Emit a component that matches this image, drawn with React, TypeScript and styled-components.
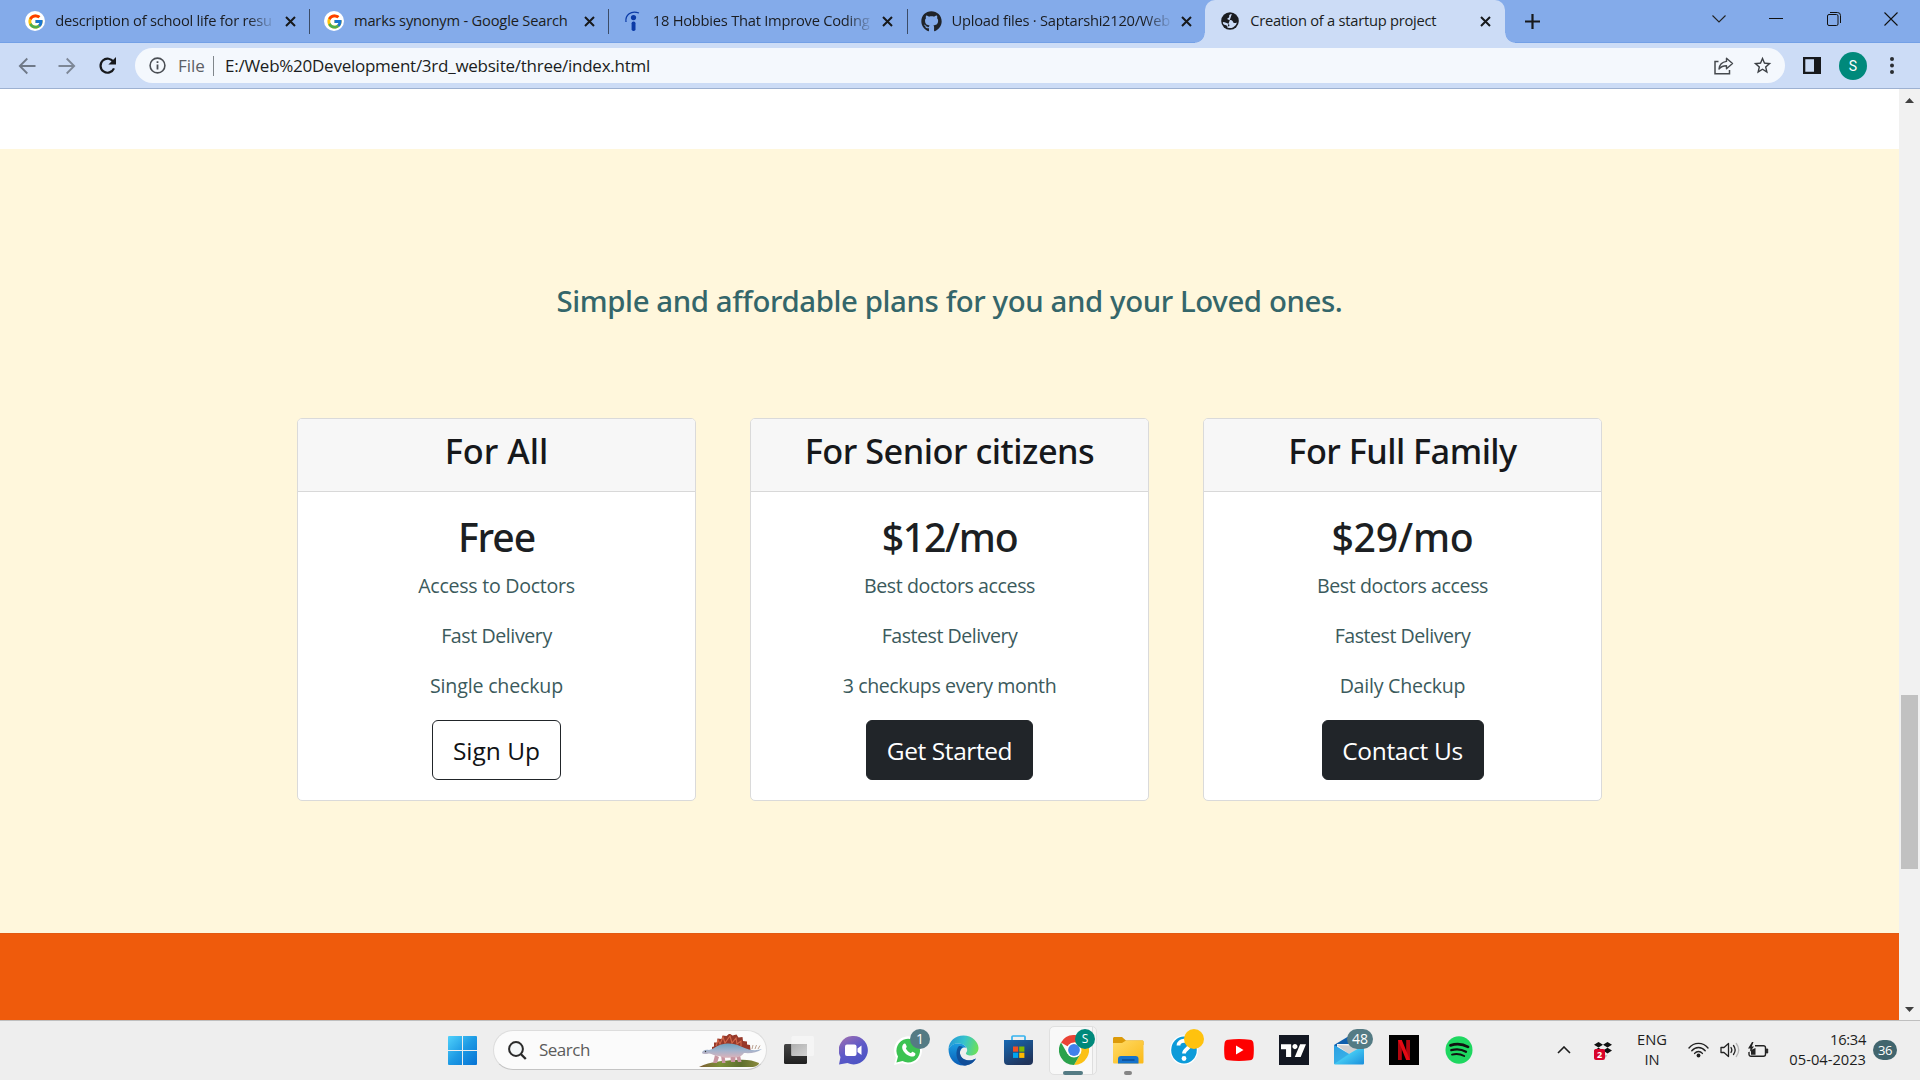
import React from "react";
import styled, { createGlobalStyle, css } from "styled-components";
import { FcGoogle } from "react-icons/fc";
import { FaGithub } from "react-icons/fa";
import { SiTradingview } from "react-icons/si";
import { MdStarBorder } from "react-icons/md";

const GlobalStyle = createGlobalStyle`
  * { box-sizing: border-box; }
  body { margin: 0; overflow: hidden; }
  svg { display: block; flex: none; }
`;

const Screen = styled.div`
  width: 1920px;
  height: 1080px;
  display: flex;
  flex-direction: column;
  font-family: "Open Sans", "Noto Sans", sans-serif;
  color: #1b1d21;
  overflow: hidden;
`;

/* ---------- browser chrome ---------- */

const TabStrip = styled.div`
  height: 43px;
  flex: none;
  display: flex;
  background: #84abea;
  box-shadow: inset 0 -1px 0 #73a0e6;
  padding-left: 10.25px;
`;

const Tab = styled.div<{ $active?: boolean }>`
  width: 298.75px;
  height: 43px;
  flex: none;
  display: flex;
  align-items: center;
  padding: 0 15px 1px 15px;
  position: relative;
  ${p =>
    p.$active &&
    css`
      width: 300px;
      background: #ccdcf6;
      border-radius: 10px 10px 0 0;
      &::before,
      &::after {
        content: "";
        position: absolute;
        bottom: 0;
        width: 10px;
        height: 10px;
      }
      &::before {
        left: -10px;
        background: radial-gradient(circle at 0 0, transparent 9.2px, #ccdcf6 10px);
      }
      &::after {
        right: -10px;
        background: radial-gradient(circle at 100% 0, transparent 9.2px, #ccdcf6 10px);
      }
    `}
`;

const TabDivider = styled.div`
  position: absolute;
  right: -1px;
  top: 9px;
  width: 1px;
  height: 25px;
  background: #3b4c68;
`;

const TabIcon = styled.div`
  width: 20px;
  height: 20px;
  flex: none;
  display: flex;
  align-items: center;
  justify-content: center;
`;

const RoundIcon = styled(TabIcon)`
  border-radius: 50%;
  background: #fff;
`;

const TabTitle = styled.div<{ $ls: number; $fade?: boolean }>`
  width: 220px;
  margin-left: 10px;
  padding-bottom: 2px;
  flex: none;
  overflow: hidden;
  white-space: nowrap;
  font-size: 14.7px;
  line-height: 24px;
  letter-spacing: ${p => p.$ls}px;
  ${p =>
    p.$fade &&
    css`
      mask-image: linear-gradient(to right, #000 193px, transparent 221px);
    `}
`;

const TabClose = styled.div`
  margin-left: 9.5px;
`;

const WindowControls = styled.div`
  margin-left: auto;
  height: 37px;
  display: flex;
  align-items: center;
`;

const ControlCell = styled.div`
  width: 57.5px;
  display: flex;
  justify-content: center;
`;

const NewTab = styled.div`
  margin: 14px 0 0 20px;
`;

const Toolbar = styled.div`
  height: 46px;
  flex: none;
  display: flex;
  align-items: center;
  background: #ccdcf6;
  border-bottom: 1px solid #9db1d1;
  padding: 0 18px;
`;

const NavButtons = styled.div`
  display: flex;
  gap: 22px;
  width: 117px;
  align-items: center;
`;

const AddressBar = styled.div`
  width: 1650px;
  height: 35px;
  border-radius: 18px;
  background: #f4f8fd;
  display: flex;
  align-items: center;
  padding: 0 12px 0 14px;
`;

const Scheme = styled.span`
  margin-left: 12px;
  width: 26px;
  font-size: 17px;
  line-height: 30px;
  color: #5c6066;
`;

const SchemeDivider = styled.span`
  width: 1px;
  height: 20px;
  margin: 0 11px 0 9px;
  background: #80868b;
`;

const Url = styled.span`
  font-size: 17px;
  line-height: 30px;
  letter-spacing: -0.25px;
`;

const AddressActions = styled.div`
  margin-left: auto;
  display: flex;
  gap: 18px;
  align-items: center;
`;

const ToolbarActions = styled.div`
  margin-left: 18px;
  display: flex;
  align-items: center;
`;

const Avatar = styled.div`
  width: 28px;
  height: 28px;
  margin-left: 18px;
  margin-right: 23px;
  border-radius: 50%;
  background: #00897b;
  color: #fff;
  font: 14px/28px Roboto, sans-serif;
  text-align: center;
`;

/* ---------- page ---------- */

const Viewport = styled.div`
  height: 931px;
  flex: none;
  display: flex;
`;

const Page = styled.main`
  width: 1899px;
  display: flex;
  flex-direction: column;
  background: #fff;
`;

const Pricing = styled.section`
  margin-top: 60px;
  height: 784px;
  flex: none;
  background: #fff7dc;
  padding-top: 134px;
  font-family: "Noto Sans", sans-serif;
`;

const PricingTitle = styled.h3`
  margin: 0;
  height: 36px;
  font-size: 29.4px;
  line-height: 36px;
  font-weight: 500;
  letter-spacing: -0.4px;
  text-align: center;
  white-space: nowrap;
  color: #34666a;
`;

const Plans = styled.div`
  margin: 99px 297px 0 297px;
  display: flex;
  justify-content: space-between;
`;

const Card = styled.article`
  width: 399px;
  height: 383px;
  border: 1px solid #dadada;
  border-radius: 5px;
  background: #fff;
  overflow: hidden;
  text-align: center;
  white-space: nowrap;
`;

const CardHeader = styled.div`
  background: #f7f7f7;
  border-bottom: 1px solid #d8d8d8;
  padding: 11px 0 19px;
`;

const PlanName = styled.h2<{ $ls: number }>`
  margin: 0;
  font-size: 34.3px;
  line-height: 42px;
  font-weight: 500;
  letter-spacing: ${p => p.$ls}px;
  color: #16181b;
`;

const CardBody = styled.div`
  padding: 21px 20px 20px;
  display: flex;
  flex-direction: column;
  align-items: center;
`;

const Price = styled.h2<{ $ls: number }>`
  margin: 0 0 10px;
  font-size: 39.2px;
  line-height: 48px;
  font-weight: 500;
  letter-spacing: ${p => p.$ls}px;
  color: #1c1f23;
`;

const Feature = styled.p<{ $ls: number }>`
  margin: 0 0 20px;
  font-family: "Open Sans", sans-serif;
  font-size: 19.6px;
  line-height: 30px;
  letter-spacing: ${p => p.$ls}px;
  color: #3b5a5c;
`;

const PlanButton = styled.button<{ $w: number; $ls: number; $outline?: boolean }>`
  width: ${p => p.$w}px;
  height: 60px;
  margin-top: -1px;
  padding: 1px 0 0;
  border: 1px solid #212529;
  border-radius: 6px;
  background: ${p => (p.$outline ? "#fff" : "#212529")};
  color: ${p => (p.$outline ? "#101214" : "#fff")};
  font-family: "Open Sans", sans-serif;
  font-size: 24.5px;
  line-height: 57px;
  letter-spacing: ${p => p.$ls}px;
`;

const NextSection = styled.section`
  flex: 1;
  background: #ef5b0c;
  border-top: 1px solid #e25a12;
`;

const Scrollbar = styled.div`
  width: 21px;
  background: #f1f1f1;
  display: flex;
  flex-direction: column;
  align-items: center;
  padding: 9px 0 8px;
`;

const Thumb = styled.div`
  width: 17px;
  height: 174px;
  margin-top: 592px;
  margin-bottom: auto;
  background: #c1c1c1;
`;

/* ---------- taskbar ---------- */

const Taskbar = styled.footer`
  height: 60px;
  flex: none;
  display: flex;
  align-items: center;
  background: #eeeeee;
  border-top: 1px solid #bfbfbf;
  padding: 0 23px 1px 448px;
`;

const SearchBox = styled.div`
  width: 274px;
  height: 40px;
  margin: 0 4px 0 16px;
  border: 1px solid #dddddd;
  border-bottom-color: #c4c4c4;
  border-radius: 20px;
  background: #fbfbfb;
  display: flex;
  align-items: center;
  padding-left: 14px;
`;

const SearchLabel = styled.span`
  margin: 0 0 0 12px;
  width: 160px;
  font-size: 17px;
  line-height: 28px;
  letter-spacing: -0.5px;
  color: #5b5b5b;
`;

const AppCell = styled.div`
  width: 55px;
  height: 59px;
  display: flex;
  align-items: center;
  justify-content: center;
  position: relative;
`;

const ActiveTile = styled.div`
  position: absolute;
  left: 3px;
  top: 5px;
  width: 48px;
  height: 49px;
  border: 1px solid #e0e0e0;
  border-radius: 5px;
  background: linear-gradient(to right, #f8f8f8 42px, #dedede 42px, #dedede 43px, #f3f3f3 43px);
`;

const AppIcon = styled.div`
  position: relative;
`;

const Badge = styled.div<{ $w?: number; $x: number; $bg?: string; $size?: number }>`
  position: absolute;
  left: ${p => p.$x}px;
  top: 8px;
  width: ${p => p.$w ?? 20}px;
  height: 20px;
  border-radius: 10px;
  background: ${p => p.$bg ?? "#547b84"};
  color: #fff;
  font-size: ${p => p.$size ?? 14}px;
  line-height: 20px;
  text-align: center;
`;

const Indicator = styled.div<{ $w: number; $bg: string }>`
  position: absolute;
  top: 50px;
  left: ${p => 27 - p.$w / 2}px;
  width: ${p => p.$w}px;
  height: 4px;
  border-radius: 2px;
  background: ${p => p.$bg};
`;

const Tray = styled.div`
  margin-left: auto;
  display: flex;
  align-items: center;
`;

const TrayCell = styled.div<{ $w: number }>`
  width: ${p => p.$w}px;
  display: flex;
  justify-content: center;
  position: relative;
`;

const TrayBadge = styled.div`
  position: absolute;
  left: 11px;
  top: 7px;
  width: 11px;
  height: 11px;
  border-radius: 2px;
  background: #d9042b;
  color: #fff;
  font: bold 9px/11px "Noto Sans", sans-serif;
  text-align: center;
`;

const TrayText = styled.div<{ $w: number; $align: string }>`
  width: ${p => p.$w}px;
  display: flex;
  flex-direction: column;
  align-items: ${p => p.$align};
  padding-bottom: 2px;
  font-size: 14.7px;
  line-height: 20px;
  white-space: nowrap;
  color: #1d1d1d;
`;

const Time = styled.span`
  letter-spacing: -0.3px;
`;

const Notifications = styled.div`
  width: 24px;
  height: 20px;
  margin-left: 7px;
  border-radius: 10px;
  background: #41656e;
  color: #fff;
  font-size: 13px;
  line-height: 20px;
  letter-spacing: -0.4px;
  text-align: center;
`;

/* ---------- drawings ---------- */

const CrossIcon = () => (
  <svg width="11" height="11" viewBox="0 0 11 11">
    <path d="M1 1l9 9M10 1l-9 9" stroke="#17191c" strokeWidth="2" />
  </svg>
);

const GlobeIcon = () => (
  <svg width="18" height="18" viewBox="0 0 18 18">
    <circle cx="9" cy="9" r="8.800" fill="#1b1d21" />
    <path
      d="M10.800 1.900c-2.300.3-2.800 1.300-2.600 2.500.2 1-.9 1.200-1.600 1.800-.6.600.2 1.500 1.500 1.600 2 .1 3.600.7 3.900 2 .2 1.200 1.200 1.300 2.800 1.100l1.200-.5A7.200 7.200 0 0 1 6.300 15.500c.3-1 1.500-1.200 2-1.700.5-.7-.2-1.500-1-2-1.500-.8-3-1.600-5.400-1.800A7.200 7.200 0 0 0 2 11.500c.6 1.200 1.800 1.400 3 1.700 1.200.3 1 1.400 1.300 2.300"
      fill="#ccdcf6"
    />
  </svg>
);

const IndeedIcon = () => (
  <svg width="20" height="22" viewBox="0 0 20 22">
    <path d="M3 12C2 5 8 0 16 3" fill="none" stroke="#0b3aa6" strokeWidth="1.300" />
    <circle cx="10.500" cy="7.600" r="2.600" fill="#0b3aa6" />
    <rect x="8.600" y="11.500" width="3.900" height="9.500" rx="1.800" fill="#0b3aa6" />
  </svg>
);

const ArrowIcon = ({ flip, color }: { flip?: boolean; color: string }) => (
  <svg width="18" height="18" viewBox="0 0 18 18">
    <g transform={flip ? "translate(18 0) scale(-1 1)" : undefined} fill="none" stroke={color} strokeWidth="1.800">
      <path d="M17.500 9H2M9.300 1.500L1.800 9l7.500 7.500" />
    </g>
  </svg>
);

const ReloadIcon = () => (
  <svg width="19" height="18" viewBox="0 0 19 18">
    <path d="M15.600 5.200A7 7 0 1 0 16 11.400" fill="none" stroke="#17191c" strokeWidth="2.200" />
    <path d="M18 0v7.600h-7.600z" fill="#17191c" />
  </svg>
);

const InfoIcon = () => (
  <svg width="17" height="17" viewBox="0 0 17 17">
    <circle cx="8.500" cy="8.500" r="7.400" fill="none" stroke="#4a4e54" strokeWidth="1.600" />
    <path d="M8.500 7.500v5M8.500 4.200v1.800" stroke="#4a4e54" strokeWidth="1.800" />
  </svg>
);

const ShareIcon = () => (
  <svg width="20" height="18" viewBox="0 0 20 18">
    <path d="M4.500 4.500H1v12.300h14.500V13" fill="none" stroke="#45494e" strokeWidth="1.500" />
    <path d="M12.500 1.200l6 5.300-6 5.300V8.800C9 8.800 6.800 9.800 5 12c.4-4 3-7 7.500-7.600z" fill="none" stroke="#45494e" strokeWidth="1.400" strokeLinejoin="round" />
  </svg>
);

const WindowsLogo = () => (
  <svg width="29" height="29" viewBox="0 0 29 29">
    <defs>
      <linearGradient id="win" x1="0" y1="0" x2="1" y2="1">
        <stop offset="0" stopColor="#50d1fb" />
        <stop offset=".5" stopColor="#1d9ae4" />
        <stop offset="1" stopColor="#0672d4" />
      </linearGradient>
    </defs>
    <path d="M1 0h13v14H0V1a1 1 0 0 1 1-1zM15 0h13a1 1 0 0 1 1 1v13H15zM0 15h14v14H1a1 1 0 0 1-1-1zM15 15h14v13a1 1 0 0 1-1 1H15z" fill="url(#win)" />
  </svg>
);

const SearchIcon = () => (
  <svg width="19" height="19" viewBox="0 0 19 19">
    <circle cx="8" cy="8" r="6.900" fill="#f4f7f8" stroke="#2a2a2a" strokeWidth="2" />
    <path d="M12.800 13l5 5" stroke="#2a2a2a" strokeWidth="2.400" />
  </svg>
);

const Stegosaurus = () => (
  <svg width="63" height="33" viewBox="0 0 63 33">
    <defs>
      <linearGradient id="hill" x1="0" x2="1">
        <stop offset="0" stopColor="#7d5a33" />
        <stop offset=".35" stopColor="#7b9138" />
        <stop offset=".7" stopColor="#5d6f2d" />
        <stop offset="1" stopColor="#8b8a3d" />
      </linearGradient>
      <linearGradient id="hide" x1="0" y1="0" x2="0" y2="1">
        <stop offset="0" stopColor="#6ea0bd" />
        <stop offset=".5" stopColor="#a3b3cc" />
        <stop offset="1" stopColor="#dcb3ba" />
      </linearGradient>
    </defs>
    <path d="M0 33C12 27 24 27 36 26c10-1 18 0 24 3 0 2-3 3.500-6 4z" fill="url(#hill)" />
    <path d="M13 16l0-3 2-.5 0-4 3 0 .5-4 4 .5 1-3.500 4 .5 3-2.500 3 2 4-1 2 3 4-.5.500 4 4 .5 0 3 3 .5.500 5z" fill="#97392a" />
    <path d="M17 12l2-6 2 4 3-7 2 6 5-7 2 7 4-5 1 6 4-3 0 5" fill="none" stroke="#d2694b" strokeWidth="1.100" />
    <path d="M16 21l-2 8h4l2-6zM22 21l1 8h3.500l-1-8zM31 20l1 8h4l1-8zM36 19l3 9h3.500l-2-9z" fill="#c896a1" />
    <path d="M3 19c0-2 3-4 7-3 5-1 9-6 18-6.500C38 9 44 14 50 15.500c5 1 9 .8 13-.5-5 4-12 4.500-18 4-3 4-6 5-12 4-6 2-10 0-13-1-4 0-7-2-10-2.500-3 .8-6 1-7-.5z" fill="url(#hide)" />
    <path d="M53 15l1-4M56 15l1.500-4M59 15l2-3.500" stroke="#b9a08f" strokeWidth="1" />
    <circle cx="6.500" cy="17.500" r=".7" fill="#333" />
  </svg>
);

const TaskViewIcon = () => (
  <svg width="30" height="28" viewBox="0 0 30 28">
    <defs>
      <linearGradient id="tvd" x1="0" y1="0" x2="0" y2="1"><stop stopColor="#454545" /><stop offset="1" stopColor="#202020" /></linearGradient>
      <linearGradient id="tvo" x1="0" y1="0" x2="1" y2="1"><stop stopColor="#b0b0b0" /><stop offset="1" stopColor="#d2d2d2" /></linearGradient>
    </defs>
    <rect y="8" width="23" height="20" rx="1.500" fill="url(#tvd)" />
    <rect x="7.500" width="22.500" height="20" rx="1.500" fill="#f5f5f5" />
    <rect x="7.500" y="8" width="15.500" height="12" fill="url(#tvo)" />
  </svg>
);

const ChatIcon = () => (
  <svg width="29" height="29" viewBox="0 0 29 29">
    <defs>
      <linearGradient id="chat" x1=".1" y1="0" x2=".7" y2="1"><stop stopColor="#a06fb0" /><stop offset=".5" stopColor="#5f5ac8" /><stop offset="1" stopColor="#4b53c4" /></linearGradient>
    </defs>
    <path d="M14.500 0a14.200 14.200 0 1 1-6 27L0 28.500l1.500-7.500A14.200 14.200 0 0 1 14.500 0z" fill="url(#chat)" />
    <rect x="6" y="8.500" width="11.500" height="11.500" rx="2" fill="#fff" />
    <path d="M18.500 12.500l4-3v9.500l-4-3z" fill="#fff" />
  </svg>
);

const WhatsAppIcon = () => (
  <svg width="29" height="29" viewBox="0 0 29 29">
    <path d="M0 29l2-7.500A14 14 0 1 1 8 27z" fill="#fff" />
    <path d="M2.400 26.600l1.600-6A11.800 11.800 0 1 1 8.500 25z" fill="#3cc352" />
    <path d="M9.300 8.200c1-1.300 2.200-.8 2.600.4l.8 1.900c.2.600-1 1.700-.7 2.300 1 2 2.500 3.300 4.500 4.200.6.200 1.500-1.600 2.100-1.300l2.300 1.200c1.200.7.2 2.700-1 3.300-1.600.8-3.800.2-6-1-2.300-1.300-4.300-3.500-5.300-5.800-.7-1.800-.6-3.600.7-5.200z" fill="#fff" />
  </svg>
);

const EdgeIcon = () => (
  <svg width="31" height="31" viewBox="0 0 31 31">
    <defs>
      <linearGradient id="e1" x1="0" y1=".3" x2="1" y2=".5"><stop stopColor="#2597d8" /><stop offset=".5" stopColor="#36c3cc" /><stop offset="1" stopColor="#6be05a" /></linearGradient>
      <linearGradient id="e2" x1="0" y1="0" x2="0" y2="1"><stop stopColor="#1b9de2" /><stop offset="1" stopColor="#0a5cb5" /></linearGradient>
    </defs>
    <path d="M.5 14C1 6 7 .5 15.500.5S30.500 7 30.500 13c0 5-4 7.500-8 7.500-3 0-5-1.300-4.500-2.500 1-1.500 1.500-2.500 1-4C18 10 14 8.500 10 8.500c-4 0-7.500 2-9.500 5.500z" fill="url(#e1)" />
    <path d="M.5 14c2-4 6-6 10-5.500 4 0 7 2 8 4.500-3-1.500-6 .5-6.500 4-.5 5 4 9 10 8.500 2.500-.3 4-1 6-2-3 5-7.500 7-12.500 7C6.500 30.500.5 23 .5 14z" fill="url(#e2)" />
    <path d="M11 11c-4 4-4 16 5 19.500 5 0 9.500-2.500 12-7-8 4-15 1-16-5-.3-3 .5-5 3-6.500-1.500-.8-3-1-4-1z" fill="#124a93" opacity=".85" />
  </svg>
);

const StoreIcon = () => (
  <svg width="29" height="30" viewBox="0 0 29 30">
    <defs>
      <linearGradient id="st" x1="0" y1="0" x2=".6" y2="1"><stop stopColor="#1769b3" /><stop offset="1" stopColor="#20345b" /></linearGradient>
    </defs>
    <path d="M8 6V1.800C8 1.300 8.300 1 9 1h11c.7 0 1 .3 1 .8V6" fill="none" stroke="#35b2ee" strokeWidth="1.700" />
    <path d="M0 5h29v21a4 4 0 0 1-4 4H4a4 4 0 0 1-4-4z" fill="url(#st)" />
    <path d="M9 11.500h5.200v5.200H9z" fill="#f25022" />
    <path d="M15.200 11.500h5.200v5.200h-5.200z" fill="#7fba00" />
    <path d="M9 17.700h5.200v5.200H9z" fill="#00a4ef" />
    <path d="M15.200 17.700h5.200v5.200h-5.200z" fill="#ffb900" />
  </svg>
);

const ChromeIcon = () => (
  <svg width="30" height="30" viewBox="0 0 30 30">
    <path d="M15 15L2 7.500A15 15 0 0 1 28 7.500H15z" fill="#ea4335" />
    <path d="M28 7.500A15 15 0 0 1 15 30l6.500-11.300L15 7.500z" fill="#fbc116" />
    <path d="M2 7.500A15 15 0 0 0 15 30l6.500-11.300L15 15 8.500 18.700z" fill="#2ba24c" />
    <circle cx="15" cy="15" r="7.500" fill="#fff" />
    <circle cx="15" cy="15" r="5.900" fill="#4081ec" />
  </svg>
);

const ExplorerIcon = () => (
  <svg width="31" height="27" viewBox="0 0 31 27">
    <defs>
      <linearGradient id="fo" x1="0" y1="0" x2="1" y2="1"><stop stopColor="#ffdb67" /><stop offset="1" stopColor="#fbb917" /></linearGradient>
    </defs>
    <path d="M0 1.500C0 .6.600 0 1.500 0H9l4 3.500H29c1 0 1.500.5 1.500 1.500v3H0z" fill="#dc9a09" />
    <path d="M0 6h9l4-2.500h16.500c.7 0 1 .3 1 1V25c0 1-.5 1.500-1.500 1.500H1.500C.5 26.500 0 26 0 25z" fill="url(#fo)" />
    <path d="M5 26.500V22c0-2 1-3 3-3h14.500c2 0 3 1 3 3v4.500z" fill="#1673cc" />
    <path d="M9 23h12.500" stroke="#0b4d96" strokeWidth="1.500" />
  </svg>
);

const HelpIcon = () => (
  <svg width="28" height="30" viewBox="0 0 28 30">
    <ellipse cx="14" cy="15" rx="14" ry="14.800" fill="#fff" />
    <ellipse cx="14" cy="15" rx="12.800" ry="13.600" fill="#0d9bd9" />
    <path d="M8.500 10.500c0-6.500 11-6 11-.5 0 4-5.500 4-5.500 8.500" fill="none" stroke="#fff" strokeWidth="3.800" />
    <circle cx="14" cy="23.500" r="2.400" fill="#fff" />
  </svg>
);

const YouTubeIcon = () => (
  <svg width="30" height="22" viewBox="0 0 30 22">
    <path d="M4 .7Q15-.5 26 .7q3 .3 3.400 3.300.9 7 0 14-.4 3-3.400 3.300-11 1.200-22 0Q1 21 .6 18q-.9-7 0-14Q1 1 4 .7z" fill="#fe0000" />
    <path d="M12 6.500l7.500 4.500-7.500 4.500z" fill="#fff" />
  </svg>
);

const DarkTile = styled.div<{ $bg: string }>`
  width: 30px;
  height: 30px;
  display: flex;
  align-items: center;
  justify-content: center;
  background: ${p => p.$bg};
  color: #fff;
`;

const NetflixMark = () => (
  <svg width="12" height="20" viewBox="0 0 12 20">
    <path d="M0 0h3.800v20H0zM8.200 0H12v20H8.200z" fill="#b1060f" />
    <path d="M0 0h3.800L12 20H8.200z" fill="#e50914" />
  </svg>
);

const MailIcon = () => (
  <svg width="30" height="30" viewBox="0 0 30 30">
    <defs>
      <linearGradient id="ml" x1="0" y1="0" x2="1" y2="1"><stop stopColor="#2a9fe4" /><stop offset=".5" stopColor="#42c7f2" /><stop offset="1" stopColor="#1a8edb" /></linearGradient>
    </defs>
    <path d="M0 10L15 1l15 9v8H0z" fill="#0f5fad" />
    <path d="M3 9h24v8L15 22 3 15z" fill="#f1f1f1" />
    <path d="M3 10l24 1-11 9z" fill="#cfcfcf" />
    <path d="M0 10l15 9 15-9v18c0 1-.5 1.500-1.500 1.500h-27C.5 29.500 0 29 0 28z" fill="url(#ml)" />
    <path d="M0 29L15 19 0 10z" fill="#2f9fe0" opacity=".6" />
  </svg>
);

const SpotifyIcon = () => (
  <svg width="28" height="28" viewBox="0 0 28 28">
    <ellipse cx="14" cy="14" rx="13.500" ry="13.700" fill="#1ed760" />
    <g fill="none" stroke="#111" strokeLinecap="round">
      <path d="M5.500 9.300c6-1.800 12.500-1.200 17.500 1.600" strokeWidth="2.800" />
      <path d="M6.300 14.200c5.200-1.400 10.500-.8 14.700 1.600" strokeWidth="2.300" />
      <path d="M7 18.600c4.500-1.100 8.600-.6 12.200 1.400" strokeWidth="1.900" />
    </g>
  </svg>
);

const WifiIcon = () => (
  <svg width="21" height="16" viewBox="0 0 21 16">
    <g fill="none" stroke="#222" strokeWidth="1.400" strokeLinecap="round">
      <path d="M1 6C6-.2 15-.2 20 6" />
      <path d="M3.800 8.800c3.700-4.500 9.700-4.500 13.400 0" />
      <path d="M6.600 11.400c2.200-2.600 5.600-2.600 7.800 0" />
    </g>
    <circle cx="10.500" cy="13.500" r="1.900" fill="#222" />
  </svg>
);

const VolumeIcon = () => (
  <svg width="20" height="16" viewBox="0 0 20 16">
    <g fill="none" stroke="#222" strokeWidth="1.300" strokeLinecap="round" strokeLinejoin="round">
      <path d="M1 5.500h3L8.500 1.500v13L4 10.500H1z" />
      <path d="M11 5.500c1 1.500 1 3.500 0 5M13.500 3.500c2 2.700 2 6.300 0 9" />
      <path d="M16.300 1.500c3 4 3 9 0 13" stroke="#b5b5b5" />
    </g>
  </svg>
);

const BatteryIcon = () => (
  <svg width="21" height="16" viewBox="0 0 21 16">
    <path d="M7 3.700h8.500a2 2 0 0 1 2 2v6.600a2 2 0 0 1-2 2H3a2 2 0 0 1-2-2V10" fill="none" stroke="#222" strokeWidth="1.400" />
    <path d="M18.300 7h1.400v4h-1.400z" fill="#222" stroke="#222" />
    <path d="M4 0L0 6.500h2.500L1.700 10 6 4.500H3.800L5.500 0zM3 8l4.500-2v6.800H3z" fill="#222" />
  </svg>
);

const DropboxIcon = () => (
  <svg width="18" height="17" viewBox="0 0 18 17">
    <path d="M4.500 0L9 2.800l-4.500 2.800L0 2.800zM13.500 0L18 2.800l-4.500 2.800L9 2.800zM4.500 5.800L9 8.600l-4.500 2.800L0 8.600zM13.500 5.800L18 8.600l-4.500 2.800L9 8.600z" fill="#111" />
    <path d="M9 12l4.500 1.500L11 16z" fill="#b8b8b8" />
  </svg>
);

/* ---------- data ---------- */

const google = <RoundIcon><FcGoogle size={17} /></RoundIcon>;

const tabs = [
  { title: "description of school life for resu", ls: -0.23, fade: true, divider: true, icon: google },
  { title: "marks synonym - Google Search", ls: -0.2, divider: true, icon: google },
  { title: "18 Hobbies That Improve Coding", ls: -0.24, fade: true, divider: true, icon: <TabIcon><IndeedIcon /></TabIcon> },
  { title: "Upload files · Saptarshi2120/Web", ls: -0.25, fade: true, icon: <TabIcon><FaGithub size={21} color="#20242a" /></TabIcon> },
  { title: "Creation of a startup project", ls: -0.25, active: true, icon: <TabIcon><GlobeIcon /></TabIcon> },
];

const plans = [
  {
    name: "For All", nameLs: 0, price: "Free", priceLs: -1.1,
    features: [["Access to Doctors", -0.27], ["Fast Delivery", -0.42], ["Single checkup", -0.18]],
    action: "Sign Up", width: 129, ls: 0, outline: true,
  },
  {
    name: "For Senior citizens", nameLs: -0.49, price: "$12/mo", priceLs: -1.3,
    features: [["Best doctors access", -0.41], ["Fastest Delivery", -0.49], ["3 checkups every month", -0.4]],
    action: "Get Started", width: 167, ls: -0.42,
  },
  {
    name: "For Full Family", nameLs: -0.54, price: "$29/mo", priceLs: -0.2,
    features: [["Best doctors access", -0.41], ["Fastest Delivery", -0.49], ["Daily Checkup", -0.25]],
    action: "Contact Us", width: 162, ls: -0.33,
  },
] as const;

export default function App() {
  return (
    <Screen>
      <GlobalStyle />
      <TabStrip>
        {tabs.map(tab => (
          <Tab key={tab.title} $active={tab.active}>
            {tab.icon}
            <TabTitle $ls={tab.ls} $fade={tab.fade}>{tab.title}</TabTitle>
            <TabClose><CrossIcon /></TabClose>
            {tab.divider && <TabDivider />}
          </Tab>
        ))}
        <NewTab>
          <svg width="15" height="15" viewBox="0 0 15 15"><path d="M7.500 0v15M0 7.500h15" stroke="#17191c" strokeWidth="2.200" /></svg>
        </NewTab>
        <WindowControls>
          <ControlCell>
            <svg width="14" height="8" viewBox="0 0 14 8"><path d="M.5.5L7 7 13.500.5" fill="none" stroke="#222" strokeWidth="1.100" /></svg>
          </ControlCell>
          <ControlCell>
            <svg width="14" height="2" viewBox="0 0 14 2"><path d="M0 .5h14" stroke="#111" /></svg>
          </ControlCell>
          <ControlCell>
            <svg width="14" height="14" viewBox="0 0 14 14">
              <rect x=".5" y="2.500" width="10.500" height="11" rx="1.500" fill="none" stroke="#111" />
              <path d="M3 .5h7.500a3 3 0 0 1 3 3V11" fill="none" stroke="#111" />
            </svg>
          </ControlCell>
          <ControlCell>
            <svg width="14" height="14" viewBox="0 0 14 14"><path d="M.5.5l13 13M13.500.5l-13 13" stroke="#111" strokeWidth="1.100" /></svg>
          </ControlCell>
        </WindowControls>
      </TabStrip>

      <Toolbar>
        <NavButtons>
          <ArrowIcon color="#6f7988" />
          <ArrowIcon flip color="#7d8796" />
          <ReloadIcon />
        </NavButtons>
        <AddressBar>
          <InfoIcon />
          <Scheme>File</Scheme>
          <SchemeDivider />
          <Url>E:/Web%20Development/3rd_website/three/index.html</Url>
          <AddressActions>
            <ShareIcon />
            <MdStarBorder size={21} color="#3b3f44" />
          </AddressActions>
        </AddressBar>
        <ToolbarActions>
          <svg width="18" height="17" viewBox="0 0 18 17"><path d="M0 0h18v17H0zM2.300 2.300v12.400h8.700V2.300z" fill="#17191c" fillRule="evenodd" /></svg>
          <Avatar>S</Avatar>
          <svg width="4" height="17" viewBox="0 0 4 17"><g fill="#2a2d31"><circle cx="2" cy="2" r="2" /><circle cx="2" cy="8.500" r="2" /><circle cx="2" cy="15" r="2" /></g></svg>
        </ToolbarActions>
      </Toolbar>

      <Viewport>
        <Page>
          <Pricing>
            <PricingTitle>Simple and affordable plans for you and your Loved ones.</PricingTitle>
            <Plans>
              {plans.map(plan => (
                <Card key={plan.name}>
                  <CardHeader><PlanName $ls={plan.nameLs}>{plan.name}</PlanName></CardHeader>
                  <CardBody>
                    <Price $ls={plan.priceLs}>{plan.price}</Price>
                    {plan.features.map(([text, ls]) => <Feature key={text} $ls={ls}>{text}</Feature>)}
                    <PlanButton $w={plan.width} $ls={plan.ls} $outline={"outline" in plan}>{plan.action}</PlanButton>
                  </CardBody>
                </Card>
              ))}
            </Plans>
          </Pricing>
          <NextSection />
        </Page>
        <Scrollbar>
          <svg width="9" height="5" viewBox="0 0 9 5"><path d="M4.500 0L9 5H0z" fill="#404040" /></svg>
          <Thumb />
          <svg width="9" height="5" viewBox="0 0 9 5"><path d="M4.500 5L9 0H0z" fill="#404040" /></svg>
        </Scrollbar>
      </Viewport>

      <Taskbar>
        <WindowsLogo />
        <SearchBox>
          <SearchIcon />
          <SearchLabel>Search</SearchLabel>
          <Stegosaurus />
        </SearchBox>
        <AppCell><TaskViewIcon /></AppCell>
        <AppCell><ChatIcon /></AppCell>
        <AppCell><WhatsAppIcon /><Badge $x={29}>1</Badge></AppCell>
        <AppCell><EdgeIcon /></AppCell>
        <AppCell><StoreIcon /></AppCell>
        <AppCell>
          <ActiveTile />
          <AppIcon><ChromeIcon /></AppIcon>
          <Badge $x={29} $bg="#00897b" $size={12}>S</Badge>
          <Indicator $w={20} $bg="#547b84" />
        </AppCell>
        <AppCell><ExplorerIcon /><Indicator $w={8} $bg="#858585" /></AppCell>
        <AppCell><HelpIcon /><Badge $x={28} $bg="#ffc20e" /></AppCell>
        <AppCell><YouTubeIcon /></AppCell>
        <AppCell><DarkTile $bg="#131722"><SiTradingview size={25} /></DarkTile></AppCell>
        <AppCell><MailIcon /><Badge $x={26} $w={26}>48</Badge></AppCell>
        <AppCell><DarkTile $bg="#000"><NetflixMark /></DarkTile></AppCell>
        <AppCell><SpotifyIcon /></AppCell>
        <Tray>
          <TrayCell $w={38}>
            <svg width="14" height="8" viewBox="0 0 14 8"><path d="M1 7l6-6 6 6" fill="none" stroke="#1d1d1d" strokeWidth="1.600" /></svg>
          </TrayCell>
          <TrayCell $w={39}><DropboxIcon /><TrayBadge>2</TrayBadge></TrayCell>
          <TrayText $w={60} $align="center"><span>ENG</span><span>IN</span></TrayText>
          <TrayCell $w={33}><WifiIcon /></TrayCell>
          <TrayCell $w={29}><VolumeIcon /></TrayCell>
          <TrayCell $w={29}><BatteryIcon /></TrayCell>
          <TrayText $w={93} $align="flex-end"><Time>16:34</Time><span>05-04-2023</span></TrayText>
          <Notifications>36</Notifications>
        </Tray>
      </Taskbar>
    </Screen>
  );
}
